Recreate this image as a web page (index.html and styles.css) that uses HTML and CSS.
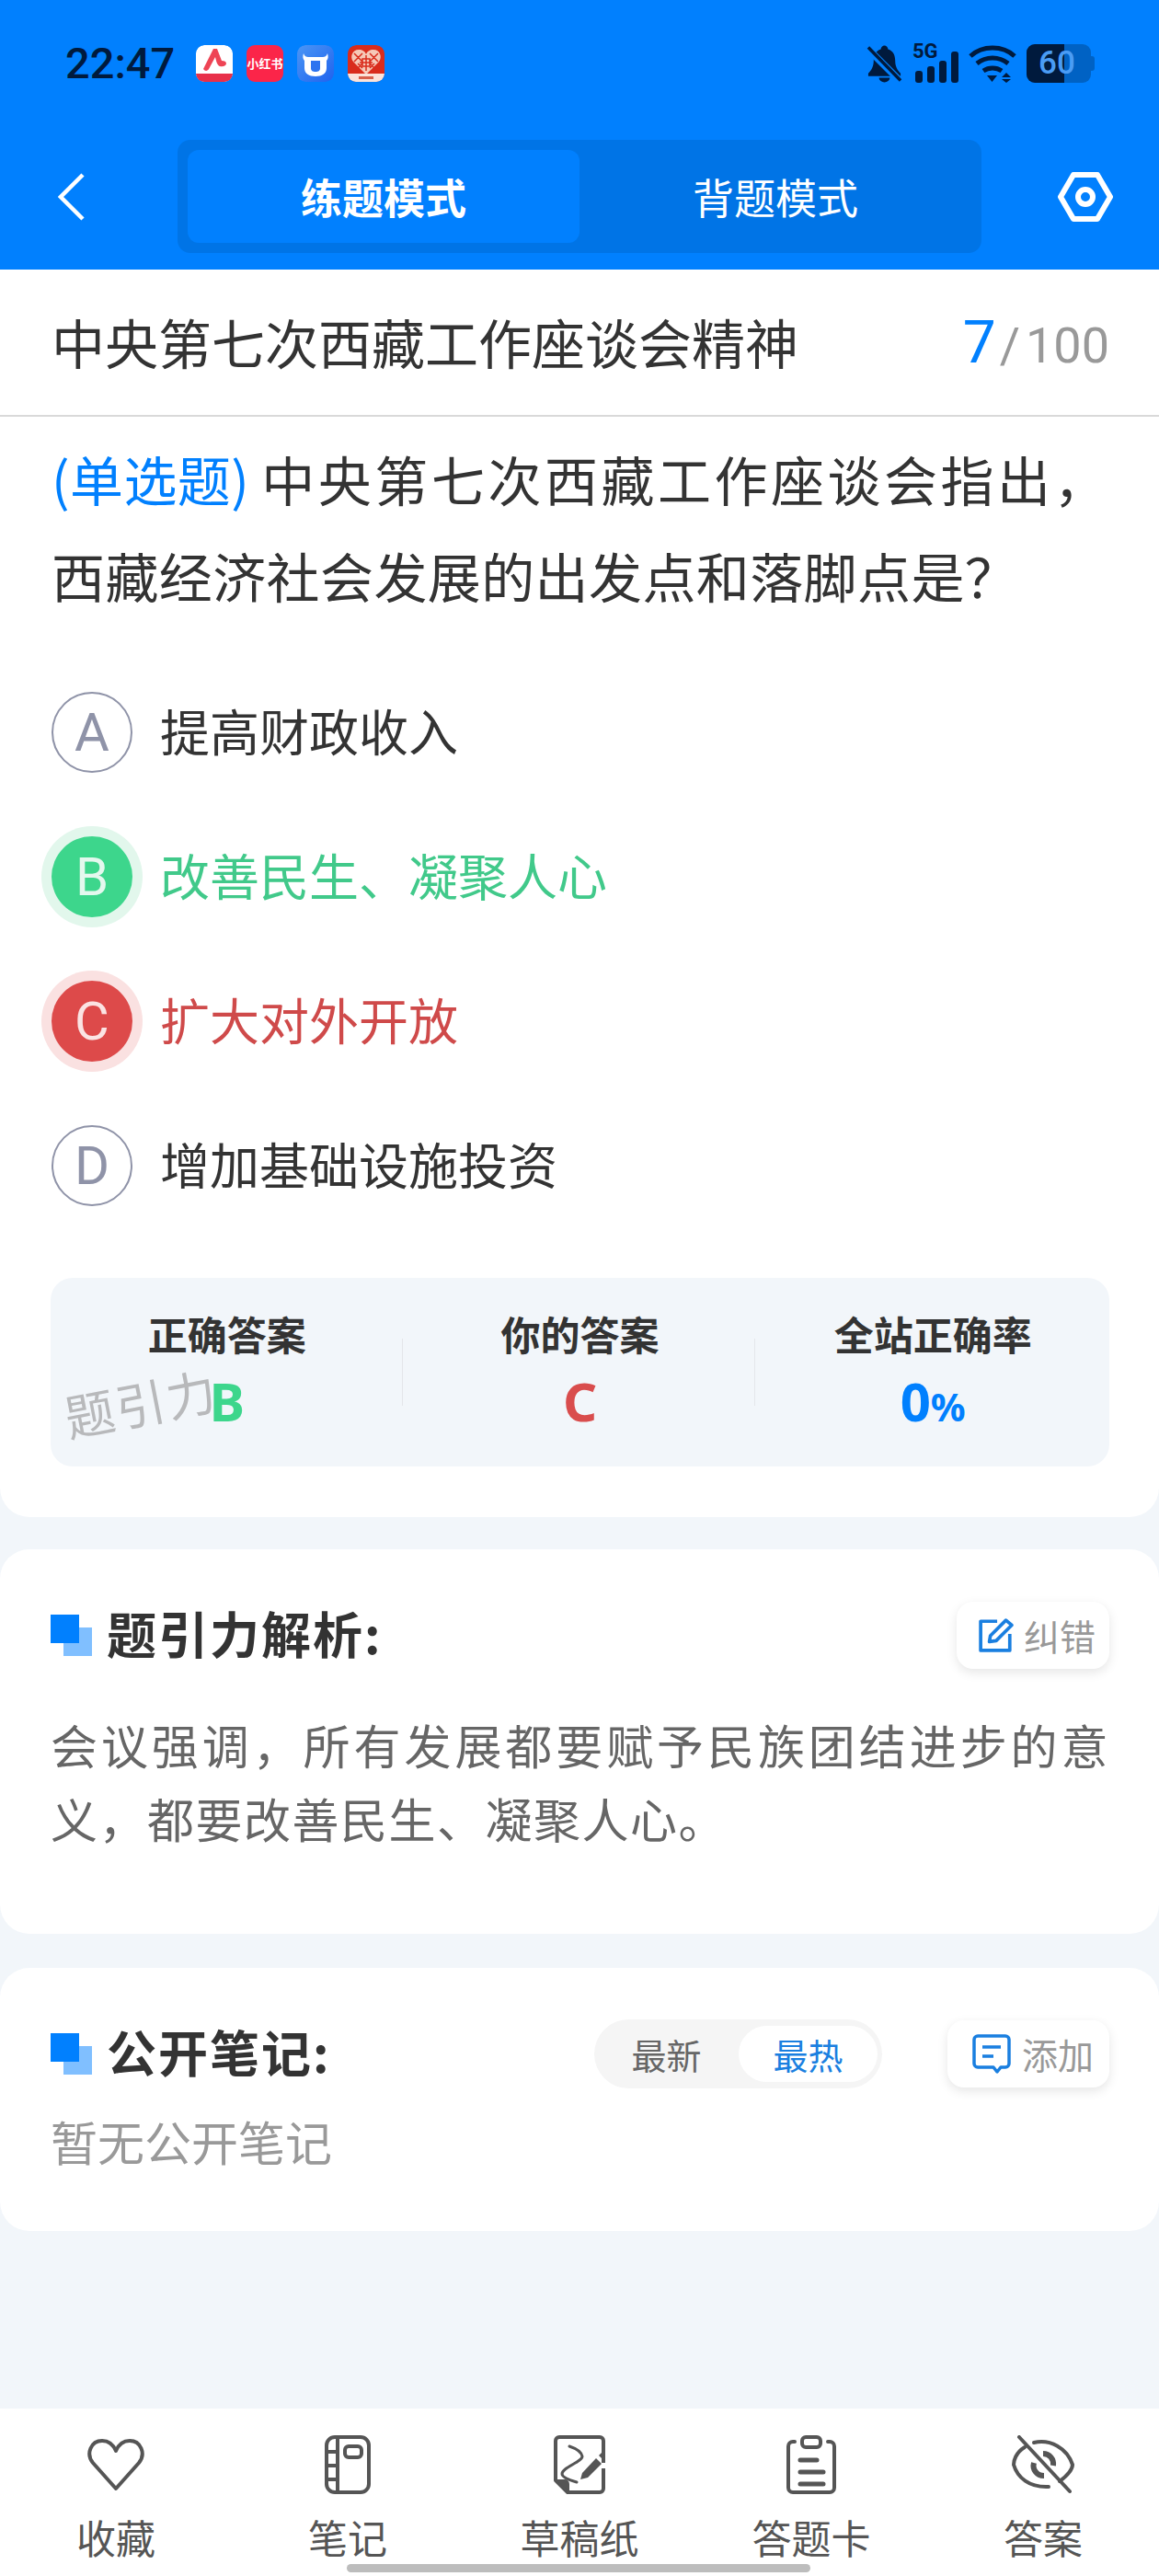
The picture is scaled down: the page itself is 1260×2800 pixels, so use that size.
FILE: index.html
```html
<!DOCTYPE html>
<html lang="zh-CN">
  <head>
    <meta charset="utf-8">
    <title>练题模式</title>
    <link rel="stylesheet" href="styles.css">
  </head>
  <body>
    <div class="page">
      <div class="top-bar">
        <div class="status-bar">
          <span class="time">22:47</span>
          <div class="app-icons">
            <svg class="app-icon" viewBox="0 0 40 40">
              <rect width="40" height="40" rx="9" fill="#fff"/>
              <path d="M0 31h40v1a8 8 0 0 1-8 8H8a8 8 0 0 1-8-8z" fill="#e8304a"/>
              <path d="M8 26 19 4h4l5 13c3 0 5 1 5 3s-3 4-7 3c-3-1-4-6-5-10l-7 13c-1 2-4 3-6 0z" fill="#ee4455"/>
            </svg>
            <div class="app-icon red-book">小红书</div>
            <svg class="app-icon" viewBox="0 0 40 40">
              <defs>
                <linearGradient id="blue-app" x1="0" y1="0" x2="1" y2="1">
                  <stop offset="0" stop-color="#4b96f5"/>
                  <stop offset="1" stop-color="#1f63ee"/>
                </linearGradient>
              </defs>
              <rect width="40" height="40" rx="9" fill="url(#blue-app)"/>
              <path d="M7 9c1 3 3 4 5 4h16c2 0 4-1 5-4 1 3 1 6-1 8v8c0 6-5 9-12 9s-12-3-12-9v-8c-2-2-2-5-1-8z" fill="#fff"/>
              <path d="M15 17h10v8c0 3-2 4-5 4s-5-1-5-4z" fill="#2c74f0"/>
            </svg>
            <svg class="app-icon" viewBox="0 0 40 40">
              <rect width="40" height="40" rx="9" fill="#d92c1c"/>
              <path d="M20 32 6 18c-4-5-1-13 6-13 4 0 7 2 8 5 1-3 4-5 8-5 7 0 10 8 6 13z" fill="#f6c9b8"/>
              <path d="M7 9l9 9m-9 0 9-9M24 9l9 9m-9 0 9-9M11 20l5 5m-5 0 5-5M24 20l5 5m-5 0 5-5M16 15h8v8h-8zM20 11v17M13 19h14" stroke="#d92c1c" stroke-width="1.500" fill="none"/>
              <path d="M0 31h40v1a8 8 0 0 1-8 8H8a8 8 0 0 1-8-8z" fill="#fbe3da"/>
              <path d="M12 35.500h16" stroke="#d8604c" stroke-width="3"/>
            </svg>
          </div>
          <div class="status-right">
            <svg class="bell-icon" viewBox="0 0 40 42">
              <path d="M20 1c2 0 4 2 4 4 6 2 8 7 8 13 0 6 2 10 6 14v3H2v-3c4-4 6-8 6-14 0-6 2-11 8-13 0-2 2-4 4-4z" fill="#001a3d"/>
              <path d="M14 37h12c0 3-3 5-6 5s-6-2-6-5z" fill="#001a3d"/>
              <path d="M1 4 38 41" stroke="#0180fe" stroke-width="8"/>
              <path d="M2 3 38 40" stroke="#001a3d" stroke-width="3.500"/>
            </svg>
            <div class="signal">
              <span class="five-g">5G</span>
              <div class="signal-bars">
                <i class="bar-1"></i><i class="bar-2"></i><i class="bar-3"></i><i class="bar-4"></i>
              </div>
            </div>
            <svg class="wifi-icon" viewBox="0 0 52 42">
              <path d="M2 13C15 1 37 1 50 13" stroke="#001a3d" stroke-width="5" fill="none"/>
              <path d="M9 21c10-8 24-8 34 0" stroke="#001a3d" stroke-width="5" fill="none"/>
              <path d="M16 29c6-4 14-4 20 0" stroke="#001a3d" stroke-width="5" fill="none"/>
              <path d="M20 34h11l-5.500 7z M41 31l5 5H36z M36 38h10l-5 4z" fill="#001a3d"/>
            </svg>
            <div class="battery">
              <div class="battery-fill"></div>
              <span class="battery-text">60</span>
              <div class="battery-tip"></div>
            </div>
          </div>
        </div>
        <div class="nav-bar">
          <svg class="back-icon" viewBox="0 0 30 54">
            <path d="M27 3 3 27l24 24" stroke="#fff" stroke-width="4.500" fill="none"/>
          </svg>
          <div class="mode-switch">
            <div class="mode-tab active">练题模式</div>
            <div class="mode-tab">背题模式</div>
          </div>
          <svg class="hex-icon" viewBox="0 0 60 54">
            <path d="M3 27 17 3h26l14 24-14 24H17z" stroke="#fff" stroke-width="6" stroke-linejoin="round" fill="none"/>
            <circle cx="30" cy="27" r="8" stroke="#fff" stroke-width="6" fill="none"/>
          </svg>
        </div>
      </div>

      <div class="card question-card">
        <div class="paper-row">
          <div class="paper-title">中央第七次西藏工作座谈会精神</div>
          <div class="paper-count"><span class="count-now">7</span><span class="count-sep">/</span>100</div>
        </div>
        <div class="question"><span class="question-type">(单选题)</span>中央第七次西藏工作座谈会指出&#xFF0C;西藏经济社会发展的出发点和落脚点是&#xFF1F;</div>
        <div class="options">
          <div class="option">
            <span class="option-mark">A</span>
            <span class="option-text">提高财政收入</span>
          </div>
          <div class="option right">
            <span class="option-mark">B</span>
            <span class="option-text">改善民生、凝聚人心</span>
          </div>
          <div class="option wrong">
            <span class="option-mark">C</span>
            <span class="option-text">扩大对外开放</span>
          </div>
          <div class="option">
            <span class="option-mark">D</span>
            <span class="option-text">增加基础设施投资</span>
          </div>
        </div>
        <div class="result-box">
          <div class="result-col">
            <div class="result-label">正确答案</div>
            <div class="result-value green">B</div>
          </div>
          <div class="result-col">
            <div class="result-label">你的答案</div>
            <div class="result-value red">C</div>
          </div>
          <div class="result-col">
            <div class="result-label">全站正确率</div>
            <div class="result-value blue">0<small>%</small></div>
          </div>
          <div class="watermark">题引力</div>
        </div>
      </div>

      <div class="card analysis-card">
        <div class="section-head">
          <div class="section-mark"></div>
          <div class="section-title">题引力解析:</div>
          <div class="small-btn fix-btn">
            <svg class="btn-icon" viewBox="0 0 36 36">
              <path d="M19 4H2v30h30V17" stroke="#1a7fe0" stroke-width="3.500" stroke-linejoin="round" fill="none"/>
              <path d="M12 19 28 3l6 5-16 16-7 1z" stroke="#1a7fe0" stroke-width="3.500" stroke-linejoin="round" fill="none"/>
            </svg>
            <span>纠错</span>
          </div>
        </div>
        <div class="analysis-text">会议强调&#xFF0C;所有发展都要赋予民族团结进步的意义&#xFF0C;都要改善民生、凝聚人心。</div>
      </div>

      <div class="card notes-card">
        <div class="section-head">
          <div class="section-mark"></div>
          <div class="section-title">公开笔记:</div>
          <div class="sort-switch">
            <div class="sort-tab">最新</div>
            <div class="sort-tab active">最热</div>
          </div>
          <div class="small-btn add-btn">
            <svg class="btn-icon" viewBox="0 0 44 44">
              <path d="M7 3h30a4 4 0 0 1 4 4v26a4 4 0 0 1-4 4h-5l-4 5-4-5H7a4 4 0 0 1-4-4V7a4 4 0 0 1 4-4z" stroke="#1a7fe0" stroke-width="3.500" fill="none" stroke-linejoin="round"/>
              <path d="M12 15h20M12 25h12" stroke="#1a7fe0" stroke-width="3.500"/>
            </svg>
            <span>添加</span>
          </div>
        </div>
        <div class="notes-empty">暂无公开笔记</div>
      </div>

      <div class="tab-bar">
        <div class="tab-item">
          <div class="tab-icon">
            <svg width="64" height="58" viewBox="0 0 64 58">
              <path d="M32 55 7 27C-1 17 5 3 17 3c7 0 12 4 15 11C35 7 40 3 47 3c12 0 18 14 10 24z" stroke="#555" stroke-width="4" stroke-linejoin="round" fill="none"/>
            </svg>
          </div>
          <span>收藏</span>
        </div>
        <div class="tab-item">
          <div class="tab-icon">
            <svg width="50" height="64" viewBox="0 0 50 64">
              <rect x="2" y="2" width="46" height="60" rx="9" stroke="#555" stroke-width="4" fill="none"/>
              <path d="M14 2v60M2 18h12M2 33h12M2 48h12" stroke="#555" stroke-width="4" fill="none"/>
              <rect x="22" y="12" width="18" height="12" rx="4" stroke="#555" stroke-width="4" fill="none"/>
            </svg>
          </div>
          <span>笔记</span>
        </div>
        <div class="tab-item">
          <div class="tab-icon">
            <svg width="56" height="64" viewBox="0 0 56 64">
              <path d="M54 30V6a4 4 0 0 0-4-4H6a4 4 0 0 0-4 4v43l13 13h35a4 4 0 0 0 4-4V36" stroke="#555" stroke-width="4" fill="none" stroke-linejoin="round"/>
              <path d="M2 49h10a4 4 0 0 1 4 4v9z" fill="#555" stroke="#555" stroke-width="2" stroke-linejoin="round"/>
              <path d="M17 12c6 2 13 6 14 11 0 6-22 12-22 19 0 4 9 7 16 9" stroke="#555" stroke-width="3" fill="none" stroke-linecap="round"/>
              <path d="M31 41 46 25l6 6-15 15-8 2z" fill="#555"/>
              <path d="M49 22l3-3 3 3-3 3z" fill="#555"/>
            </svg>
          </div>
          <span>草稿纸</span>
        </div>
        <div class="tab-item">
          <div class="tab-icon">
            <svg width="54" height="64" viewBox="0 0 54 64">
              <path d="M9 7H7a5 5 0 0 0-5 5v45a5 5 0 0 0 5 5h40a5 5 0 0 0 5-5V12a5 5 0 0 0-5-5h-2" stroke="#555" stroke-width="4" stroke-linecap="round" fill="none"/>
              <rect x="17" y="2" width="20" height="11" rx="4" stroke="#555" stroke-width="4" fill="none"/>
              <path d="M15 27h18M15 40h25M15 53h25" stroke="#555" stroke-width="5" stroke-linecap="round"/>
            </svg>
          </div>
          <span>答题卡</span>
        </div>
        <div class="tab-item">
          <div class="tab-icon">
            <svg width="68" height="64" viewBox="0 0 68 64">
              <path d="M14 13C4 19 2 28 2 32c4 14 17 25 38 24M52 50c8-6 14-13 14-18C60 14 42 4 24 8" stroke="#555" stroke-width="4" stroke-linecap="round" fill="none"/>
              <path d="M8 2 63 61" stroke="#555" stroke-width="4" stroke-linecap="round"/>
              <path d="M24 30c-2 7 3 14 11 14M34 20c7 0 12 6 11 13" stroke="#555" stroke-width="6" fill="none"/>
            </svg>
          </div>
          <span>答案</span>
        </div>
        <div class="home-bar"></div>
      </div>
    </div>
  </body>
</html>
```

FILE: styles.css
```css
* {
  box-sizing: border-box;
}
body {
  margin: 0;
  background: #f2f6fa;
  font-family: "Noto Sans CJK SC", "Noto Sans", sans-serif;
  color: #333;
}
.page {
  display: flex;
  flex-direction: column;
  width: 1260px;
  min-height: 2800px;
}

/* top blue area */
.top-bar {
  height: 293px;
  background: #0180fe;
}
.status-bar {
  display: flex;
  align-items: center;
  height: 47px;
  padding: 45px 70px 0 71px;
  box-sizing: content-box;
}
.time {
  font-family: Roboto, sans-serif;
  font-size: 47px;
  font-weight: 500;
  color: #001a3d;
  width: 142px;
  line-height: 47px;
}
.app-icons {
  display: flex;
  gap: 15px;
}
.app-icon {
  display: block;
  width: 40px;
  height: 40px;
  border-radius: 9px;
}
.red-book {
  background: #fb2549;
  color: #fff;
  font-size: 13px;
  font-weight: 700;
  line-height: 40px;
  text-align: center;
  white-space: nowrap;
}
.status-right {
  display: flex;
  align-items: center;
  margin-left: auto;
  gap: 11px;
}
.bell-icon {
  width: 39px;
  height: 42px;
}
.signal {
  position: relative;
  width: 50px;
  height: 42px;
}
.five-g {
  position: absolute;
  left: 0;
  top: -6px;
  font-family: Roboto, sans-serif;
  font-size: 22px;
  font-weight: 700;
  color: #001a3d;
  line-height: 28px;
}
.signal-bars {
  position: absolute;
  left: 3px;
  bottom: 0;
  display: flex;
  align-items: flex-end;
  gap: 5px;
}
.signal-bars i {
  display: block;
  width: 8px;
  border-radius: 3px;
  background: #001a3d;
}
.bar-1 { height: 13px; }
.bar-2 { height: 18px; }
.bar-3 { height: 24px; }
.bar-4 { height: 34px; }
.wifi-icon {
  width: 52px;
  height: 42px;
}
.battery {
  position: relative;
  width: 70px;
  height: 42px;
  border-radius: 9px;
  background: #0062c4;
  margin-right: 4px;
}
.battery-fill {
  width: 41px;
  height: 42px;
  border-radius: 9px 0 0 9px;
  background: #001a3d;
}
.battery-text {
  position: absolute;
  left: 13px;
  top: 0;
  font-family: Roboto, sans-serif;
  font-size: 35px;
  font-weight: 500;
  line-height: 42px;
  color: #4a9cf5;
}
.battery-tip {
  position: absolute;
  right: -4px;
  top: 13px;
  width: 4px;
  height: 16px;
  border-radius: 0 3px 3px 0;
  background: #0062c4;
}
.nav-bar {
  display: flex;
  align-items: center;
  height: 123px;
  margin-top: 60px;
  padding: 0 50px 0 63px;
}
.back-icon {
  width: 30px;
  height: 54px;
}
.mode-switch {
  display: flex;
  width: 874px;
  height: 123px;
  margin-left: 100px;
  padding: 11px;
  border-radius: 14px;
  background: #0074e6;
}
.mode-tab {
  flex: 1;
  border-radius: 12px;
  font-size: 45px;
  line-height: 101px;
  text-align: center;
  color: #fff;
}
.mode-tab.active {
  background: #0180fe;
  font-weight: 700;
}
.hex-icon {
  width: 60px;
  height: 54px;
  margin-left: auto;
}

/* cards */
.card {
  background: #fff;
  border-radius: 0 0 32px 32px;
}
.question-card {
  position: relative;
  padding-bottom: 55px;
}
.paper-row {
  display: flex;
  align-items: center;
  justify-content: space-between;
  height: 160px;
  padding: 0 54px 0 56px;
  border-bottom: 2px solid #d9d9d9;
}
.paper-title {
  font-size: 58px;
  margin-bottom: 3px;
}
.paper-count {
  font-family: Roboto, sans-serif;
  font-size: 54px;
  color: #999;
}
.count-now {
  font-size: 64px;
  color: #0180fe;
}
.count-sep {
  margin: 0 6px 0 4px;
}
.question {
  margin-top: 15px;
  padding: 0 56px;
  font-size: 58px;
  line-height: 105px;
  letter-spacing: 0.4px;
  text-align: justify;
}
.question-type {
  display: inline-block;
  margin-right: 10px;
  color: #0180fe;
}
.options {
  display: flex;
  flex-direction: column;
  gap: 69px;
  margin-top: 74px;
  padding-left: 56px;
}
.option {
  display: flex;
  align-items: center;
  height: 88px;
  font-size: 54px;
}
.option-text {
  margin-bottom: 5px;
}
.option-mark {
  flex: none;
  width: 88px;
  height: 88px;
  margin-right: 30px;
  border: 2px solid #8f93a8;
  border-radius: 50%;
  font-family: Roboto, sans-serif;
  font-size: 58px;
  font-weight: 400;
  line-height: 84px;
  text-align: center;
  color: #8f93a8;
}
.option.right {
  color: #41c98a;
}
.option.right .option-mark {
  border: 0;
  background: #3dd68c;
  color: #e4f8ee;
  line-height: 88px;
  box-shadow: 0 0 0 11px #e2f7ec;
}
.option.wrong {
  color: #cf4a4a;
}
.option.wrong .option-mark {
  border: 0;
  background: #dd4a4a;
  color: #fbe3e3;
  line-height: 88px;
  box-shadow: 0 0 0 11px #fae1e1;
}
.result-box {
  position: relative;
  display: flex;
  height: 205px;
  margin: 78px 54px 0 55px;
  padding-top: 30px;
  border-radius: 24px;
  background: #f2f6fa;
}
.result-col {
  flex: 1;
  text-align: center;
  position: relative;
}
.result-col + .result-col::before {
  content: "";
  position: absolute;
  left: -2px;
  top: 36px;
  width: 1px;
  height: 73px;
  background: #e4e6ea;
}
.result-label {
  font-size: 43px;
  font-weight: 700;
  line-height: 60px;
}
.result-value {
  margin-top: 11px;
  font-family: "Noto Sans", sans-serif;
  font-size: 58px;
  font-weight: 700;
  line-height: 66px;
}
.result-value small {
  font-size: 42px;
}
.green { color: #3dd68c; }
.red { color: #d94d4d; }
.blue { color: #0180fe; }
.watermark {
  position: absolute;
  left: 14px;
  top: 100px;
  font-size: 54px;
  line-height: 70px;
  letter-spacing: 2px;
  color: #b8b9bb;
  transform: rotate(-11deg);
}
.analysis-card,
.notes-card {
  margin-top: 35px;
  border-radius: 32px;
}
.analysis-card {
  height: 418px;
  padding: 56px 54px 0 55px;
}
.notes-card {
  height: 286px;
  margin-top: 37px;
  padding: 56px 54px 0 55px;
}
.section-head {
  display: flex;
  align-items: center;
  height: 74px;
}
.section-mark {
  position: relative;
  flex: none;
  width: 45px;
  height: 45px;
  margin-right: 16px;
  background: linear-gradient(#0180fe, #0180fe) 0 0 / 31px 31px no-repeat,
    linear-gradient(#80bfff, #80bfff) 14px 14px / 31px 31px no-repeat;
}
.section-title {
  font-size: 54px;
  font-weight: 700;
  letter-spacing: 2px;
  margin-bottom: 6px;
}
.small-btn {
  display: flex;
  align-items: center;
  margin-left: auto;
  height: 73px;
  border-radius: 18px;
  background: #fff;
  box-shadow: 0 4px 12px rgba(0, 0, 0, 0.1);
  font-size: 39px;
  color: #999;
}
.fix-btn {
  width: 166px;
  padding-left: 24px;
}
.add-btn {
  width: 176px;
  padding-left: 26px;
  margin-left: 71px;
}
.btn-icon {
  width: 38px;
  height: 38px;
  margin-right: 11px;
}
.add-btn .btn-icon {
  width: 44px;
  height: 44px;
}
.analysis-text {
  margin-top: 42px;
  font-size: 51px;
  line-height: 80px;
  letter-spacing: 1.5px;
  text-align: justify;
  color: #666;
}
.sort-switch {
  display: flex;
  align-items: center;
  flex: none;
  width: 313px;
  height: 75px;
  margin-left: auto;
  padding: 0 5px 0 0;
  border-radius: 38px;
  background: #f5f5f5;
}
.sort-tab {
  width: 157px;
  height: 61px;
  border-radius: 31px;
  font-size: 38px;
  line-height: 61px;
  text-align: center;
  color: #666;
}
.sort-tab.active {
  width: 151px;
  background: #fff;
  color: #1a7fe0;
}
.notes-empty {
  margin-top: 22px;
  font-size: 51px;
  line-height: 72px;
  color: #999;
}

/* bottom tabs */
.tab-bar {
  position: relative;
  display: grid;
  grid-template-columns: repeat(5, 252px);
  height: 182px;
  margin-top: auto;
  padding-top: 29px;
  background: #fff;
}
.tab-item {
  display: flex;
  flex-direction: column;
  align-items: center;
  font-size: 43px;
  line-height: 60px;
  color: #555;
}
.tab-icon {
  display: flex;
  align-items: center;
  height: 64px;
  margin-bottom: 16px;
}
.home-bar {
  position: absolute;
  left: 377px;
  bottom: 4px;
  width: 504px;
  height: 9px;
  border-radius: 5px;
  background: #bdbdbd;
}
```
